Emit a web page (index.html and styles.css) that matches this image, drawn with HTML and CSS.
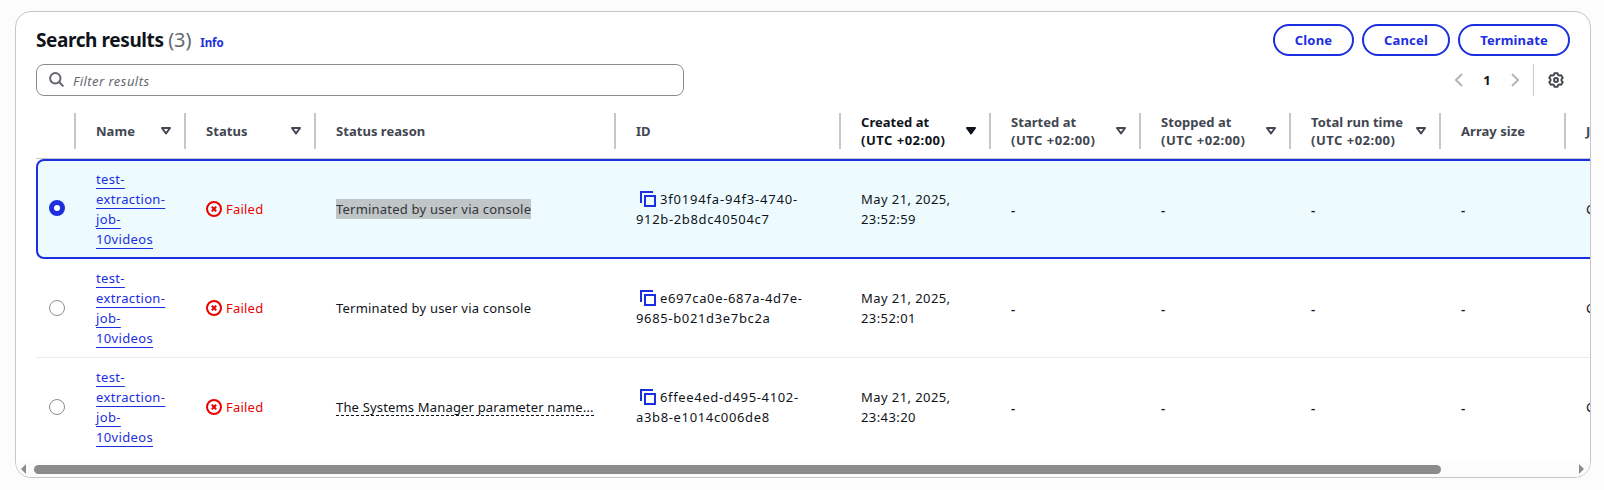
FILE: index.html
```html
<!DOCTYPE html>
<html lang="en">
<head>
<meta charset="utf-8">
<title>Search results</title>
<link rel="stylesheet" href="styles.css">
</head>
<body>
<svg class="defs" width="0" height="0" aria-hidden="true">
  <symbol id="sort" viewBox="0 0 10 8"><path d="M1 1h8L5 6.5z" fill="none" stroke="currentColor" stroke-width="2" stroke-linejoin="round"/></symbol>
  <symbol id="sorted" viewBox="0 0 10 8"><path d="M1 1h8L5 6.5z" fill="currentColor" stroke="currentColor" stroke-width="2" stroke-linejoin="round"/></symbol>
  <symbol id="failed" viewBox="0 0 16 16"><g fill="none" stroke="currentColor" stroke-width="2"><circle cx="8" cy="8" r="7"/><path d="M5.8 5.8l4.4 4.4M10.2 5.8l-4.4 4.4"/></g></symbol>
  <symbol id="copy" viewBox="0 0 16 16"><path d="M1 12V1h12M5 5h10v10H5z" fill="none" stroke="currentColor" stroke-width="2"/></symbol>
</svg>
<main class="card">
  <header class="heading">
    <h1 class="title">Search results <span class="count">(3)</span></h1>
    <a class="info">Info</a>
    <div class="actions">
      <button class="btn clone">Clone</button>
      <button class="btn cancel">Cancel</button>
      <button class="btn terminate">Terminate</button>
    </div>
  </header>
  <div class="tools">
    <label class="filter">
      <svg width="16" height="16" viewBox="0 0 16 16"><g fill="none" stroke="currentColor" stroke-width="2"><circle cx="6.3" cy="6.3" r="5.2"/><path d="M10 10l4.4 4.4"/></g></svg>
      <span class="placeholder">Filter results</span>
    </label>
    <div class="pager">
      <svg class="arrow" width="16" height="16" viewBox="0 0 16 16"><path d="M11 2L5 8l6 6" fill="none" stroke="currentColor" stroke-width="2"/></svg>
      <span class="page">1</span>
      <svg class="arrow" width="16" height="16" viewBox="0 0 16 16"><path d="M5 2l6 6-6 6" fill="none" stroke="currentColor" stroke-width="2"/></svg>
    </div>
    <div class="settings">
      <svg width="16" height="16" viewBox="0 0 16 16"><g fill="none" stroke="currentColor" stroke-width="1.9" stroke-linejoin="round"><path d="M6.4 1.2h3.2l.5 1.7 1.3.7 1.8-.4 1.6 2.7L13.5 7.2v1.6l1.3 1.3-1.6 2.7-1.8-.4-1.3.7-.5 1.7H6.4l-.5-1.7-1.3-.7-1.8.4-1.6-2.7 1.3-1.3V7.2L1.2 5.9l1.6-2.7 1.8.4 1.3-.7z"/><circle cx="8" cy="8" r="2"/></g></svg>
    </div>
  </div>
  <section class="table">
    <div class="row head">
      <div class="th"></div>
      <div class="th"><span>Name</span><svg class="tri"><use href="#sort"/></svg></div>
      <div class="th"><span>Status</span><svg class="tri"><use href="#sort"/></svg></div>
      <div class="th"><span>Status reason</span></div>
      <div class="th"><span>ID</span></div>
      <div class="th active"><span>Created at<br><span class="utc">(UTC +02:00)</span></span><svg class="tri"><use href="#sorted"/></svg></div>
      <div class="th"><span>Started at<br><span class="utc">(UTC +02:00)</span></span><svg class="tri"><use href="#sort"/></svg></div>
      <div class="th"><span>Stopped at<br><span class="utc">(UTC +02:00)</span></span><svg class="tri"><use href="#sort"/></svg></div>
      <div class="th"><span>Total run time<br><span class="utc">(UTC +02:00)</span></span><svg class="tri"><use href="#sort"/></svg></div>
      <div class="th"><span>Array size</span></div>
      <div class="th"><span>Job</span></div>
    </div>
    <div class="row selected">
      <div class="pick"><i class="radio on"></i></div>
      <div class="td"><a class="link">test-<br>extraction-<br>job-<br>10videos</a></div>
      <div class="td status"><svg class="icon"><use href="#failed"/></svg><span>Failed</span></div>
      <div class="td"><span class="mark">Terminated by user via console</span></div>
      <div class="td"><div class="id"><svg class="icon"><use href="#copy"/></svg><span class="wide">3f0194fa-94f3-4740-</span><br>912b-2b8dc40504c7</div></div>
      <div class="td"><span class="date">May 21, 2025,<br>23:52:59</span></div>
      <div class="td dash">-</div><div class="td dash">-</div><div class="td dash">-</div><div class="td dash">-</div>
      <div class="td">Container</div>
    </div>
    <div class="row second">
      <div class="pick"><i class="radio"></i></div>
      <div class="td"><a class="link">test-<br>extraction-<br>job-<br>10videos</a></div>
      <div class="td status"><svg class="icon"><use href="#failed"/></svg><span>Failed</span></div>
      <div class="td"><span class="reason">Terminated by user via console</span></div>
      <div class="td"><div class="id"><svg class="icon"><use href="#copy"/></svg>e697ca0e-687a-4d7e-<br>9685-b021d3e7bc2a</div></div>
      <div class="td"><span class="date">May 21, 2025,<br>23:52:01</span></div>
      <div class="td dash">-</div><div class="td dash">-</div><div class="td dash">-</div><div class="td dash">-</div>
      <div class="td">Container</div>
    </div>
    <div class="row">
      <div class="pick"><i class="radio"></i></div>
      <div class="td"><a class="link">test-<br>extraction-<br>job-<br>10videos</a></div>
      <div class="td status"><svg class="icon"><use href="#failed"/></svg><span>Failed</span></div>
      <div class="td"><span class="more">The Systems Manager parameter name...</span></div>
      <div class="td"><div class="id"><svg class="icon"><use href="#copy"/></svg>6ffee4ed-d495-4102-<br>a3b8-e1014c006de8</div></div>
      <div class="td"><span class="date">May 21, 2025,<br>23:43:20</span></div>
      <div class="td dash">-</div><div class="td dash">-</div><div class="td dash">-</div><div class="td dash">-</div>
      <div class="td">Container</div>
    </div>
  </section>
  <div class="scrollbar">
    <svg width="5" height="10" viewBox="0 0 5 10"><path d="M5 0v10L0 5z" fill="#8b8b8b"/></svg>
    <div class="track"><div class="thumb"></div></div>
    <svg width="5" height="10" viewBox="0 0 5 10"><path d="M0 0v10l5-5z" fill="#8b8b8b"/></svg>
  </div>
</main>
</body>
</html>
```
FILE: styles.css
```css
* { box-sizing: border-box; }
body {
  margin: 0;
  height: 490px;
  padding: 11px 13px 12px 15px;
  overflow: hidden;
  background: #fcfcfd;
  color: #0f141a;
  font: 13px/20px "Noto Sans", "Open Sans", sans-serif;
  letter-spacing: 0.21px;
}
.defs { display: block; }
.card {
  width: 1576px;
  height: 467px;
  overflow: hidden;
  border: 1px solid #c6c6cd;
  border-radius: 16px;
  background: #fff;
}
.heading {
  display: flex;
  align-items: center;
  height: 32px;
  margin: 12px 20px 8px;
}
.title { margin: 0; font-size: 19px; line-height: 24px; font-weight: 700; letter-spacing: -0.4px; }
.count { color: #656871; font-size: 20px; font-weight: 400; letter-spacing: -0.1px; }
.info { margin: 6px 0 0 9px; color: #1b2ee0; font-size: 11.5px; line-height: 16px; font-weight: 700; letter-spacing: -0.1px; }
.actions { display: flex; gap: 8px; margin-left: auto; }
.btn {
  height: 32px;
  padding: 0;
  border: 2px solid #1b2ee0;
  border-radius: 16px;
  background: #fff;
  color: #1b2ee0;
  font: 700 13px/20px "Noto Sans", sans-serif;
  letter-spacing: 0.15px;
}
.clone { width: 81px; }
.cancel { width: 88px; }
.terminate { width: 112px; }
.tools { display: flex; align-items: center; height: 32px; margin: 0 20px; }
.filter {
  display: flex;
  align-items: center;
  gap: 8px;
  width: 648px;
  height: 32px;
  padding-left: 12px;
  border: 1px solid #8c8c94;
  border-radius: 8px;
  color: #656871;
}
.placeholder { padding-top: 1px; font-style: italic; letter-spacing: 0.46px; }
.pager { display: flex; align-items: center; margin-left: auto; color: #b4b4bb; }
.page { width: 40px; color: #0f141a; font-weight: 700; text-align: center; }
.settings {
  display: flex;
  align-items: center;
  height: 32px;
  margin-left: 10px;
  padding: 0 6px 0 14px;
  border-left: 1px solid #c6c6cd;
  color: #424650;
}
.table { margin-left: 20px; height: 365px; padding-top: 8px; overflow: hidden; }
.row {
  display: grid;
  grid-template-columns: 40px 110px 130px 300px 225px 150px 150px 150px 150px 125px 150px;
  width: 1680px;
  height: 99px;
  padding: 9px 0 10px;
}
.head { height: 55px; padding: 9px 0; border-bottom: 1px solid #c6c6cd; }
.th {
  display: flex;
  align-items: center;
  justify-content: space-between;
  height: 36px;
  padding: 0 13px 0 20px;
  border-right: 2px solid #c6c6cd;
  color: #424650;
  font-weight: 700;
  line-height: 18px;
  letter-spacing: 0.04px;
  white-space: nowrap;
}
.th.active { color: #0f141a; }
.utc { letter-spacing: 0.5px; }
.tri { width: 10px; height: 8px; flex: none; }
.selected {
  height: 100px;
  padding: 8px 0;
  border: 2px solid #1b2ee0;
  border-radius: 8px;
  background: #edfbff;
}
.selected .pick { margin-left: -2px; }
.selected .td { margin-left: -2px; }
.second { border-bottom: 1px solid #ebebf0; padding-bottom: 9px; }
.pick { display: flex; align-items: center; padding-left: 13px; }
.radio { width: 16px; height: 16px; border: 1px solid #8c8c94; border-radius: 50%; background: #fff; }
.radio.on { border: 5px solid #1b2ee0; margin-top: -2px; }
.td { display: flex; align-items: center; padding-left: 20px; white-space: nowrap; }
.link { color: #1b2ee0; letter-spacing: 0.35px; text-decoration: underline; text-decoration-thickness: 1px; text-underline-offset: 4px; text-decoration-skip-ink: none; }
.status { gap: 4px; color: #eb0000; }
.icon { flex: none; width: 16px; height: 16px; }
.mark { background: #c0c5c8; color: #333638; }
.more { height: 19px; margin-top: -1px; line-height: 20px; border-bottom: 1px dashed #0f141a; letter-spacing: 0.17px; }
.date { letter-spacing: 0.42px; }
.dash { padding-top: 1px; font-weight: 600; }
.id { letter-spacing: 0.65px; }
.wide { letter-spacing: 0.82px; }
.id .icon { margin: -2px 4px 0; color: #1b2ee0; vertical-align: -3px; }
.scrollbar {
  display: flex;
  align-items: center;
  gap: 8px;
  height: 16px;
  padding: 0 6px 0 5px;
  background: #fcfcfd;
}
.track { flex: 1; }
.thumb { width: 1407px; height: 9px; border-radius: 5px; background: #8b8b8b; }
```
